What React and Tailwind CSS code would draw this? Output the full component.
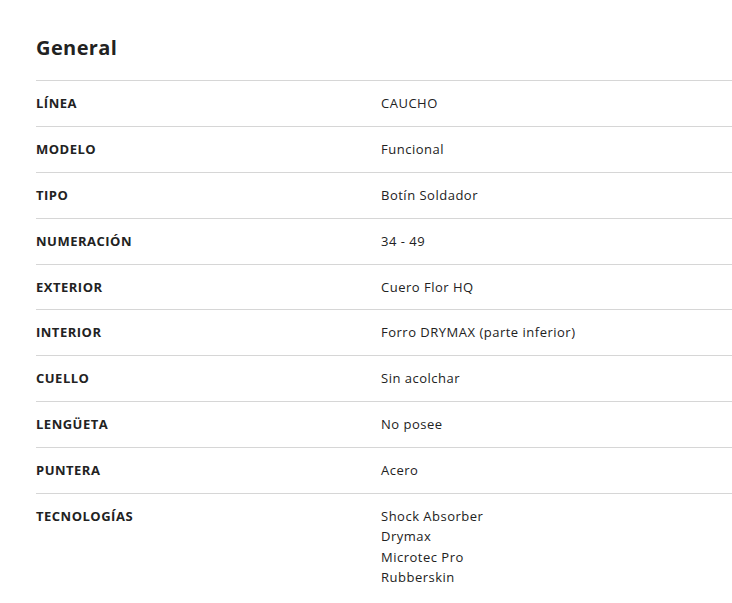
export default function App() {
  const rows = [
    ["LÍNEA", ["CAUCHO"]],
    ["MODELO", ["Funcional"]],
    ["TIPO", ["Botín Soldador"]],
    ["NUMERACIÓN", ["34 - 49"]],
    ["EXTERIOR", ["Cuero Flor HQ"]],
    ["INTERIOR", ["Forro DRYMAX (parte inferior)"]],
    ["CUELLO", ["Sin acolchar"]],
    ["LENGÜETA", ["No posee"]],
    ["PUNTERA", ["Acero"]],
    ["TECNOLOGÍAS", ["Shock Absorber", "Drymax", "Microtec Pro", "Rubberskin"]],
  ];
  return (
    <div className="bg-white text-[#222] pl-[36px] pt-[35px] font-['Open_Sans',sans-serif]">
      <h2 className="text-[20px] font-bold leading-[26px] mb-[19px] tracking-[0.4px]">General</h2>
      <div>
        {rows.map(([k, v]) => (
          <div key={k} className="flex items-start border-t border-[#d6d6d6] pt-[12px] pb-[12.9px] text-[13px] leading-[20px] tracking-[0.5px]">
            <div className="w-[345px] shrink-0 font-bold">{k}</div>
            <div className={v.length > 1 ? "flex flex-col leading-[20.6px] -mt-[0.5px]" : "flex flex-col"}>
              {v.map((x) => (
                <span key={x}>{x}</span>
              ))}
            </div>
          </div>
        ))}
      </div>
    </div>
  );
}
